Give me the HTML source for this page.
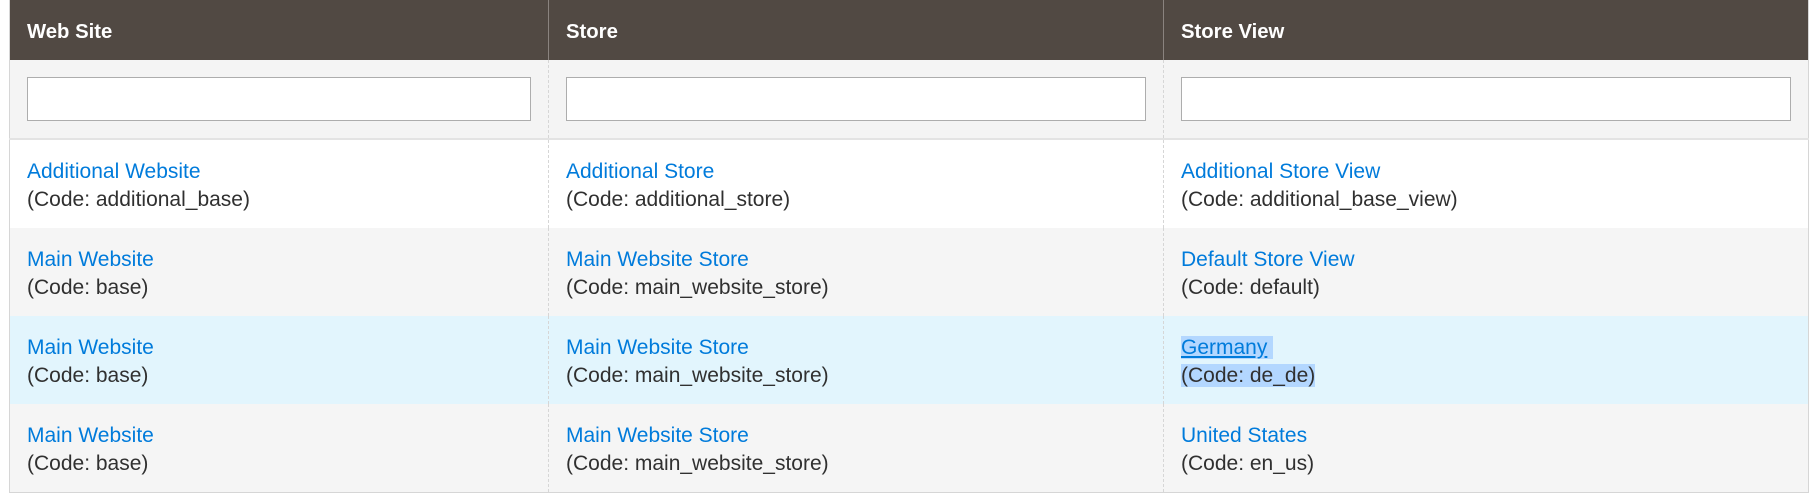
<!DOCTYPE html>
<html><head><meta charset="utf-8"><style>
body{margin:0;background:#fff;font-family:"Liberation Sans",sans-serif;width:1818px;height:498px;overflow:hidden}
table{position:absolute;left:9px;top:0;width:1800px;border-collapse:collapse;border:1px solid #d6d6d6;border-top:none}
th{background:#514943;color:#fff;font-weight:bold;font-size:20.3px;text-align:left;height:60px;padding:4px 0 0 17px;box-sizing:border-box;border-left:1px solid #8a837f}
th:first-child{border-left:none}
td{font-size:21px;color:#303030;padding:3px 0 0 17px;border-left:1px dashed #d6d6d6;line-height:28px;vertical-align:middle}
td:first-child{border-left:none}
tr.f td{background:#f4f4f4;height:78px;border-bottom:2px solid #e3e3e3;padding-top:0}
.in{height:44px;border:1px solid #adadad;background:#fff;box-sizing:border-box;margin-right:17px}
tr.r td{height:85px}
a{color:#007bdb;text-decoration:none}
.w td{background:#fff}.g td{background:#f5f5f5}.b td{background:#e2f5fd}
.sel{background:#b3d7ff}
</style></head><body>
<table>
<colgroup><col style="width:539px"><col style="width:615px"><col></colgroup>
<tr><th>Web Site</th><th>Store</th><th>Store View</th></tr>
<tr class="f"><td><div class="in"></div></td><td><div class="in" style="margin-right:17px"></div></td><td><div class="in"></div></td></tr>
<tr class="r w"><td><a>Additional Website</a><br>(Code: additional_base)</td><td><a>Additional Store</a><br>(Code: additional_store)</td><td><a>Additional Store View</a><br>(Code: additional_base_view)</td></tr>
<tr class="r g"><td><a>Main Website</a><br>(Code: base)</td><td><a>Main Website Store</a><br>(Code: main_website_store)</td><td><a>Default Store View</a><br>(Code: default)</td></tr>
<tr class="r b"><td><a>Main Website</a><br>(Code: base)</td><td><a>Main Website Store</a><br>(Code: main_website_store)</td><td><span class="sel"><a style="text-decoration:underline">Germany</a>&nbsp;</span><br><span class="sel">(Code: de_de)</span></td></tr>
<tr class="r g"><td><a>Main Website</a><br>(Code: base)</td><td><a>Main Website Store</a><br>(Code: main_website_store)</td><td><a>United States</a><br>(Code: en_us)</td></tr>
</table>
</body></html>
